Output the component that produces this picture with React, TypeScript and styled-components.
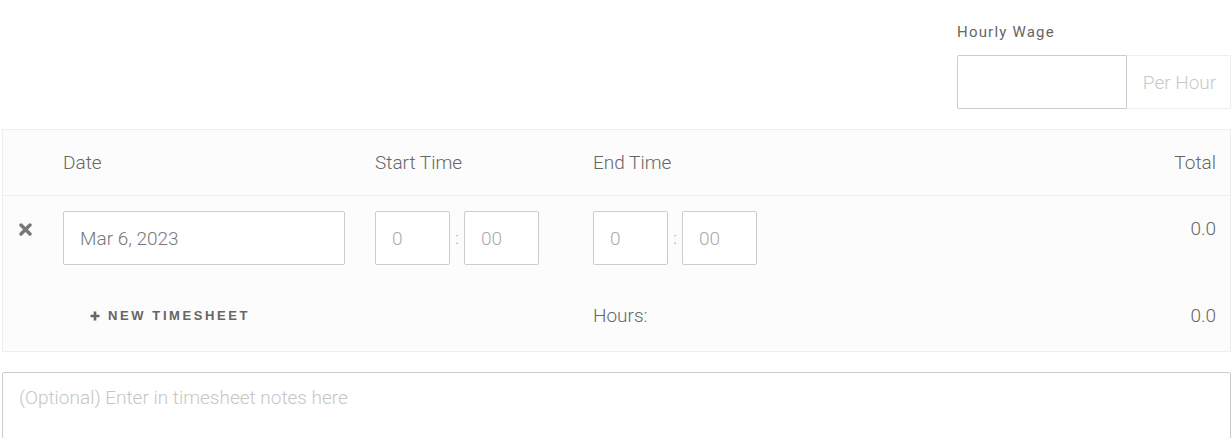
import React from "react";
import styled, { createGlobalStyle } from "styled-components";

const Global = createGlobalStyle`
  html, body { margin: 0; padding: 0; background: #fff; }
  body { font-family: Roboto, "Liberation Sans", Arial, sans-serif; color: #777; font-weight: 300; }
  * { box-sizing: border-box; }
`;

const Page = styled.div`
  width: 1231px;
  padding-left: 2px;
`;

const WageSection = styled.div`
  display: flex;
  flex-direction: column;
  align-items: flex-start;
  margin-left: 955px;
  padding-top: 22px;
`;

const WageLabel = styled.label`
  font-size: 15px;
  font-weight: 400;
  line-height: 20px;
  letter-spacing: 1.2px;
  color: #666;
  margin-bottom: 13px;
`;

const InputGroup = styled.div`
  display: flex;
  height: 54px;
  width: 274px;
`;

const WageInput = styled.input`
  width: 170px;
  height: 100%;
  border: 1px solid #ccc;
  border-radius: 2px 0 0 2px;
  background: #fff;
  outline: none;
  font: inherit;
  font-size: 19px;
  padding: 0 16px;
`;

const Addon = styled.span`
  flex: 1;
  display: flex;
  align-items: center;
  justify-content: center;
  border: 1px solid #eceef0;
  border-left: none;
  border-radius: 0 2px 2px 0;
  font-size: 19px;
  color: #c8c8c8;
  padding-left: 2px;
`;

const Panel = styled.div`
  margin-top: 20px;
  width: 1229px;
  background: #fcfcfc;
  border: 1px solid #eee;
`;

const Grid = styled.div<{ $height?: number; $align?: string; $pad?: number }>`
  display: grid;
  grid-template-columns: 60px 312px 218px 1fr auto;
  align-items: ${(p) => p.$align || "center"};
  padding: ${(p) => p.$pad ?? 0}px 14px 0 0;
  height: ${(p) => (p.$height ? `${p.$height}px` : "auto")};
`;

const HeaderRow = styled(Grid)`
  border-bottom: 1px solid #eee;
`;

const HeadCell = styled.div<{ $right?: boolean }>`
  font-size: 19px;
  color: #666;
  text-align: ${(p) => (p.$right ? "right" : "left")};
`;

const RemoveCell = styled.div`
  display: flex;
  justify-content: center;
  padding-top: 12px;
  padding-right: 15px;
  height: 54px;
`;

const DateInput = styled.input`
  width: 282px;
  height: 54px;
  border: 1px solid #ccc;
  border-radius: 2px;
  background: #fff;
  font: inherit;
  font-size: 19px;
  color: #777;
  padding: 0 16px;
  outline: none;
`;

const TimeGroup = styled.div`
  display: flex;
  align-items: center;
`;

const TimeInput = styled.input`
  width: 75px;
  height: 54px;
  border: 1px solid #ccc;
  border-radius: 2px;
  background: #fff;
  font: inherit;
  font-size: 19px;
  padding: 0 16px;
  outline: none;
  &::placeholder { color: #aaa; }
`;

const Colon = styled.span`
  width: 14px;
  text-align: center;
  font-size: 17px;
  color: #999;
`;

const Total = styled.div<{ $top?: number }>`
  font-size: 19px;
  line-height: 27px;
  color: #666;
  text-align: right;
  padding-top: ${(p) => p.$top ?? 0}px;
`;

const AddButton = styled.button`
  grid-column: 1 / span 3;
  justify-self: start;
  margin-left: 87px;
  display: flex;
  align-items: center;
  gap: 8px;
  border: none;
  background: transparent;
  padding: 0;
  font-family: "Liberation Sans", Arial, sans-serif;
  font-weight: 700;
  font-size: 13px;
  letter-spacing: 2.6px;
  color: #666;
  cursor: pointer;
`;

const Label = styled.div`
  font-size: 19px;
  color: #666;
`;

const Notes = styled.textarea`
  display: block;
  margin-top: 20px;
  width: 1229px;
  height: 90px;
  border: 1px solid #ccc;
  border-radius: 2px;
  font: inherit;
  font-size: 19px;
  padding: 13px 16px;
  resize: none;
  outline: none;
  &::placeholder { color: #c6c6c6; }
`;

const XIcon = () => (
  <svg width="13" height="13" viewBox="0 0 13 13">
    <path d="M2 2 L11 11 M11 2 L2 11" stroke="#777" strokeWidth="3.4" strokeLinecap="round" />
  </svg>
);

const PlusIcon = () => (
  <svg width="10" height="10" viewBox="0 0 10 10">
    <path d="M5 0.5 V9.5 M0.5 5 H9.5" stroke="#666" strokeWidth="2.6" />
  </svg>
);

export default function App() {
  return (
    <Page>
      <Global />
      <WageSection>
        <WageLabel>Hourly Wage</WageLabel>
        <InputGroup>
          <WageInput />
          <Addon>Per Hour</Addon>
        </InputGroup>
      </WageSection>
      <Panel>
        <HeaderRow $height={66}>
          <div />
          <HeadCell>Date</HeadCell>
          <HeadCell>Start Time</HeadCell>
          <HeadCell>End Time</HeadCell>
          <HeadCell $right>Total</HeadCell>
        </HeaderRow>
        <Grid $height={84} $align="start" $pad={15}>
          <RemoveCell>
            <XIcon />
          </RemoveCell>
          <div>
            <DateInput defaultValue="Mar 6, 2023" />
          </div>
          <TimeGroup>
            <TimeInput placeholder="0" />
            <Colon>:</Colon>
            <TimeInput placeholder="00" />
          </TimeGroup>
          <TimeGroup>
            <TimeInput placeholder="0" />
            <Colon>:</Colon>
            <TimeInput placeholder="00" />
          </TimeGroup>
          <Total $top={4}>0.0</Total>
        </Grid>
        <Grid $height={71}>
          <AddButton>
            <PlusIcon />
            NEW TIMESHEET
          </AddButton>
          <Label>Hours:</Label>
          <Total>0.0</Total>
        </Grid>
      </Panel>
      <Notes placeholder="(Optional) Enter in timesheet notes here" />
    </Page>
  );
}
